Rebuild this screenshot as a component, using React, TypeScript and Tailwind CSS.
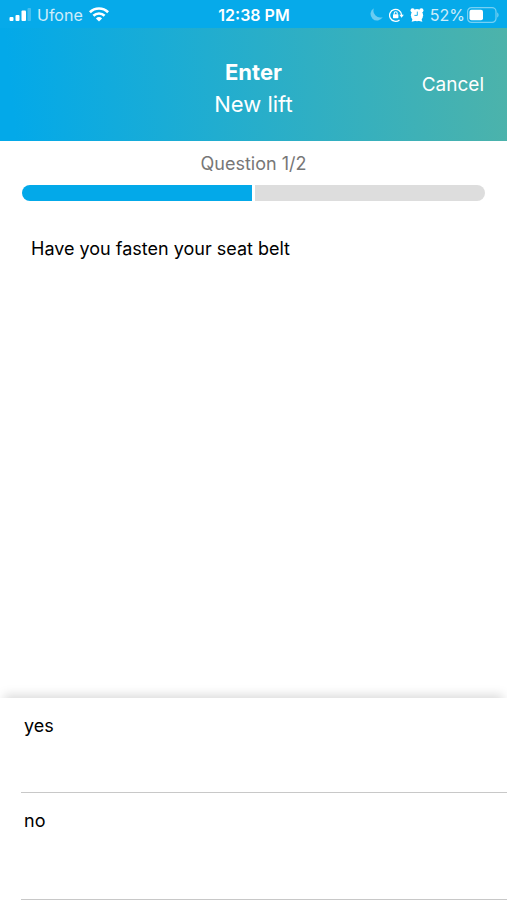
import { useState } from "react";
import { clsx } from "clsx";

interface Question {
  text: string;
  answers: string[];
}

const questions: Question[] = [
  { text: "Have you fasten your seat belt", answers: ["yes", "no"] },
  { text: "Have you checked your mirrors", answers: ["yes", "no"] },
];

function SignalIcon() {
  return (
    <svg width="22" height="14" viewBox="0 0 22 14" fill="currentColor" aria-hidden="true">
      <rect x="0.5" y="9" width="4" height="4" rx="1" />
      <rect x="6.5" y="7" width="4" height="6" rx="1" />
      <rect x="12.5" y="2.5" width="4.5" height="10.5" rx="1" />
      <rect x="18.5" y="0" width="3.5" height="13" rx="1" opacity="0.25" />
    </svg>
  );
}

function WifiIcon() {
  return (
    <svg width="20" height="15" viewBox="0 0 20 15" fill="none" stroke="currentColor" strokeWidth="2.6" aria-hidden="true">
      <path d="M0.9 5.2a13 13 0 0 1 18.2 0" />
      <path d="M4.4 8.8a8 8 0 0 1 11.2 0" />
      <path d="M10 14.6L6.9 11.4a4.5 4.5 0 0 1 6.2 0z" fill="currentColor" stroke="none" />
    </svg>
  );
}

function MoonIcon() {
  return (
    <svg width="13" height="13" viewBox="0 0 13 13" fill="currentColor" opacity="0.4" aria-hidden="true">
      <path d="M3.9 0.3A6.5 6.5 0 1 0 12.8 9 6.8 6.8 0 0 1 3.9 0.3z" />
    </svg>
  );
}

function RotationLockIcon() {
  return (
    <svg width="15" height="14" viewBox="0 0 15 14" fill="none" stroke="currentColor" aria-hidden="true">
      <path d="M10.5 11.9A6 6 0 1 1 12.6 7" strokeWidth="1.3" />
      <path d="M10.4 6.8h4.4l-2.2 2.9z" fill="currentColor" stroke="none" />
      <rect x="4" y="6.2" width="5.4" height="4" rx="0.6" fill="currentColor" stroke="none" />
      <path d="M5.2 6.4V5.2a1.5 1.5 0 0 1 3 0v1.2" strokeWidth="1.1" />
    </svg>
  );
}

function AlarmIcon() {
  return (
    <svg width="14" height="14" viewBox="0 0 14 14" aria-hidden="true">
      <g fill="currentColor">
        <circle cx="7" cy="7.2" r="6.1" />
        <circle cx="2.6" cy="2.4" r="2.1" />
        <circle cx="11.4" cy="2.4" r="2.1" />
        <path d="M1.6 13.8l1.4-4 3 3zM12.4 13.8l-1.4-4-3 3z" />
      </g>
      <path d="M7.3 3.6v3.8H4.4" fill="none" stroke="#06aaea" strokeWidth="0.9" />
    </svg>
  );
}

function BatteryIcon() {
  return (
    <svg width="32" height="16" viewBox="0 0 32 16" fill="none" aria-hidden="true">
      <rect x="0.6" y="0.6" width="28.4" height="14.8" rx="4" stroke="currentColor" strokeWidth="1.2" opacity="0.45" />
      <rect x="2.5" y="2.8" width="13.5" height="10.4" rx="2" fill="currentColor" />
      <path d="M30.3 5.5c1.6 0.6 1.6 4.4 0 5z" fill="currentColor" opacity="0.5" />
    </svg>
  );
}

function StatusBar() {
  return (
    <div className="grid h-7 grid-cols-[1fr_auto_1fr] items-center bg-[#06aaea] pr-2 pl-[9px] pt-px text-base leading-none text-white">
      <div className="flex items-center gap-1.5">
        <SignalIcon />
        <span className="opacity-80">Ufone</span>
        <WifiIcon />
      </div>
      <span className="font-semibold">12:38 PM</span>
      <div className="flex items-center justify-end gap-1.5">
        <MoonIcon />
        <RotationLockIcon />
        <AlarmIcon />
        <div className="flex items-center gap-0.5">
          <span className="opacity-80">52%</span>
          <BatteryIcon />
        </div>
      </div>
    </div>
  );
}

export default function App() {
  const [current, setCurrent] = useState(0);
  const question = questions[current];

  const handleAnswer = () => {
    setCurrent((value) => Math.min(value + 1, questions.length - 1));
  };

  return (
    <div className="flex min-h-screen flex-col bg-white font-['Inter',sans-serif] text-lg text-black">
      <StatusBar />

      <header className="grid grid-cols-[1fr_auto_1fr] items-center bg-[linear-gradient(84deg,#03a9e9_3%,#4db3aa_100%)] px-[23px] pt-7 pb-[21px] text-white">
        <h1 className="col-start-2 text-center text-[22px] leading-8">
          <span className="block font-bold">Enter</span>
          <span className="block">New lift</span>
        </h1>
        <button
          type="button"
          onClick={() => setCurrent(0)}
          className="cursor-pointer justify-self-end pb-1.5 text-[19px] leading-7"
        >
          Cancel
        </button>
      </header>

      <main className="flex flex-1 flex-col">
        <section className="px-[22px] pt-[9px]">
          <p className="text-center leading-7 text-[#777777]">
            Question {current + 1}/{questions.length}
          </p>
          {/* One segment per question */}
          <div className="mt-[7px] flex h-4 gap-[3px] overflow-hidden rounded-full">
            {questions.map((item, index) => (
              <div
                key={item.text}
                className={clsx("flex-1", index <= current ? "bg-[#03a9e9]" : "bg-[#dddddd]")}
              />
            ))}
          </div>
        </section>

        <h2 className="flex-1 px-[31px] pt-[34px] leading-7">{question.text}</h2>

        <ul className="bg-white shadow-[0_-7px_10px_-4px_rgba(0,0,0,0.15)]">
          {question.answers.map((answer) => (
            <li key={answer} className="group pl-[21px]">
              <button
                type="button"
                onClick={handleAnswer}
                className="block w-full cursor-pointer border-b border-[#c8c8c8] px-[3px] pt-3.5 pb-[52px] text-left leading-7 group-last:pb-16"
              >
                {answer}
              </button>
            </li>
          ))}
        </ul>
      </main>
    </div>
  );
}
